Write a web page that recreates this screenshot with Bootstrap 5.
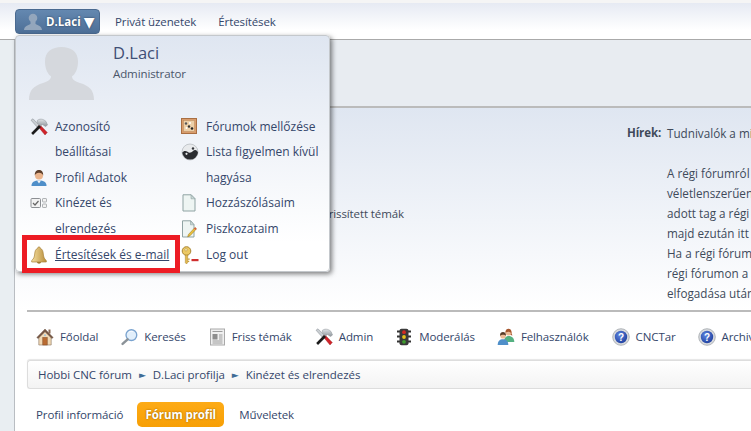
<!DOCTYPE html>
<html lang="hu">
<head>
<meta charset="utf-8">
<title>Kinézet és elrendezés</title>
<link href="https://cdn.jsdelivr.net/npm/bootstrap@5.3.0/dist/css/bootstrap.min.css" rel="stylesheet">
<style>
html,body{height:431px;overflow:hidden}
body{background:#e9eef2;font:11.5px/20px "Open Sans",sans-serif;letter-spacing:-.1px;color:#404a5a;position:relative}
a{color:#34466a;text-decoration:none}
.mk-strip{height:3px;background:#f5f5f5}
.mk-top{height:37px;background:linear-gradient(#e6eaf3,#fff 75%);border-bottom:1px solid #aaa;padding:6px 0 0 15px}
.mk-btn{width:85px;height:25px;background:linear-gradient(#6488b0,#4d6f97);border:1px solid #4a6a90;border-radius:4px;color:#fff;font-weight:700;text-shadow:0 0 2px #24384f;padding:0 0 0 8px}
.mk-tri{font-size:14px;margin-left:3px;font-family:"DejaVu Sans",sans-serif}
.mk-link{margin-left:15px;margin-right:7px;white-space:nowrap;line-height:26px}
.mk-wrap{margin-left:14px;border-left:1px solid #b9bdc2;background:#fff;height:391px;overflow:hidden}
.mk-head{height:68px;background:#e8ecf1;border-bottom:2px solid #bbb}
.mk-upper{height:202px;background:linear-gradient(#dfe6f1,#fff);white-space:nowrap;padding:15px 0 0 0}
.mk-left{width:612px;text-align:right;padding-top:81px;padding-right:223px;flex:none}
.mk-hirek{width:40px;font-weight:700;flex:none}
.mk-news{font-size:11.700px;letter-spacing:0}
.mk-rule{margin:0 0 0 12px;height:2px;background:#bbb}
.mk-menu{margin:14px 0 0 0;padding-left:21px;height:22px;white-space:nowrap}
.mk-menu a{display:flex;align-items:center;gap:6px;margin-right:23px}
.mk-menu a.mk-tight{margin-right:22px}
.mk-crumb{margin:12px 0 0 12px;padding:1px 0 0 10px;height:29px;border:1px solid #ddd;border-right:0;border-radius:3px 0 0 3px;background:linear-gradient(#fff,#f3f3f3);box-shadow:0 -1px 1px #e6e6e6;white-space:nowrap;letter-spacing:-.05px}
.mk-sep{font-size:9px;color:#3f6c96;margin:0 7px;font-family:"DejaVu Sans",sans-serif}
.mk-tabs{margin:13px 0 0 21px;height:25px}
.mk-tab-on{background:linear-gradient(#fdab16,#f79f05);border-radius:5px;color:#fff;font-weight:700;text-shadow:0 0 2px #8a5a00;width:87px;height:25px;margin:0 15px 0 14px}
.mk-drop{position:absolute;left:15px;top:35px;width:315px;height:237px;background:linear-gradient(#dfe6f1,#fff 88%);border:1px solid #c4c8cc;border-radius:4px;box-shadow:2px 2px 5px rgba(0,0,0,.5);z-index:5}
.mk-user{height:75px;padding:6px 0 0 13px;gap:19px}
.mk-name{font-size:16.500px;line-height:22px;color:#3f4f75;letter-spacing:0}
.mk-role{color:#4a566a}
.mk-cols{padding:2.600px 0 0 14px;font-size:12px;letter-spacing:0}
.mk-col-a{width:151px;flex:none}
.mk-item{line-height:25.6px;padding-left:25px;position:relative}
.mk-item svg{position:absolute;left:0;top:4px}
.mk-item a{display:block;width:95px}
.mk-col-b .mk-item a{width:120px}
.mk-marked{z-index:0}
.mk-marked a{text-decoration:underline;width:125px;white-space:nowrap}
.mk-marked::before{content:"";position:absolute;left:-8px;top:-6.500px;width:158px;height:38px;background:#fff;border:5px solid #ed1c24;z-index:-1}
</style>
</head>
<body>
<svg width="0" height="0" class="position-absolute">
<defs>
<linearGradient id="g-head" x1="0" y1="0" x2="0" y2="1"><stop offset="0" stop-color="#dfe3e6"/><stop offset="1" stop-color="#8f969c"/></linearGradient>
<linearGradient id="g-bell" x1="0" y1="0" x2="1" y2="0"><stop offset="0" stop-color="#f5dfa0"/><stop offset="1" stop-color="#b88d3a"/></linearGradient>
<radialGradient id="g-q" cx=".4" cy=".35" r=".7"><stop offset="0" stop-color="#5f86e0"/><stop offset="1" stop-color="#1f3f9e"/></radialGradient>
<symbol id="i-tools" viewBox="0 0 18 18">
<path d="M1 2.200L3 .8l7 7.200-2 2z" fill="#c9ced2" stroke="#858b91" stroke-width=".5"/>
<path d="M8 8.500L10 7l7.300 7.500L15 17z" fill="#d1232a" stroke="#8f1b1f" stroke-width=".4"/>
<path d="M1.200 15L3 17l8-8-2-2z" fill="#1b1b1b"/>
<path d="M7 2.800C9 .5 13 .5 16 3.500L17.500 7l-2 1.500-3-2-2 1.500L8 5.500z" fill="url(#g-head)" stroke="#868c92" stroke-width=".5"/>
</symbol>
<symbol id="i-user" viewBox="0 0 18 18">
<path d="M1.500 17c0-4 2.800-5.500 7.500-5.500s7.500 1.500 7.500 5.500z" fill="#4f8fc9"/>
<path d="M7 11.500h4l-2 3z" fill="#f4f4f4"/>
<circle cx="9" cy="6.500" r="4" fill="#eab48c"/>
<path d="M4.800 6.500C4.600 2.800 6.500 1 9 1s4.400 1.800 4.200 5.500c-.8-1.800-2-2.700-4.200-2.700s-3.400.9-4.200 2.700z" fill="#5e3f2a"/>
</symbol>
<symbol id="i-layout" viewBox="0 0 18 18">
<rect x="1" y="4.500" width="9.500" height="9" rx="1" fill="#f2f2f2" stroke="#8c8f93"/>
<path d="M3 9l2 2 3.500-4" fill="none" stroke="#666" stroke-width="1.200"/>
<rect x="12.500" y="4.500" width="4" height="3.500" rx=".6" fill="#f2f2f2" stroke="#9c9fa3" stroke-width=".8"/>
<rect x="12.500" y="10" width="4" height="3.500" rx=".6" fill="#f2f2f2" stroke="#9c9fa3" stroke-width=".8"/>
</symbol>
<symbol id="i-bell" viewBox="0 0 18 18">
<path d="M9 1c-1 0-1.400.6-1.500 1.500C5.500 3.200 5 5 4.700 8c-.3 3-1 5-3 6.500v1.500h14.600v-1.500c-2-1.500-2.700-3.500-3-6.500-.3-3-.8-4.800-2.800-5.500C10.400 1.600 10 1 9 1z" fill="url(#g-bell)" stroke="#a98239" stroke-width=".7"/>
<path d="M7 16h4c0 1-1 1.700-2 1.700S7 17 7 16z" fill="#a07a30"/>
</symbol>
<symbol id="i-board" viewBox="0 0 16 16">
<rect x=".5" y=".5" width="15" height="15" fill="#d99c6c" stroke="#a96f42"/>
<rect x="2.500" y="2.500" width="11" height="11" fill="#eccfa8" stroke="#b98a5c" stroke-width=".5"/>
<circle cx="5" cy="5.500" r="1.200" fill="#555"/><circle cx="9" cy="5" r="1" fill="#fff"/><circle cx="8" cy="8.500" r="1.200" fill="#333"/><circle cx="11" cy="10.500" r="1.300" fill="#222"/><circle cx="5.500" cy="10" r="1" fill="#fff"/>
</symbol>
<symbol id="i-yin" viewBox="0 0 18 18">
<circle cx="9" cy="9" r="8" fill="#e8eaec" stroke="#a8adb2" stroke-width=".6"/>
<path d="M1.200 9.800A8 8 0 0 0 17 9.800c-.7-3-3.400-3.300-5-1.800-1.700 1.600-3.500 2.500-5.500.800C5 7.500 2.500 7.500 1.200 9.800z" fill="#2a2c30"/>
<circle cx="5.500" cy="10.800" r="1.100" fill="#e8eaec"/><circle cx="12" cy="5.500" r="1.200" fill="#33363b"/>
</symbol>
<symbol id="i-page" viewBox="0 0 16 18">
<path d="M2 .8h8.200L14 4.700V17H2z" fill="#eef5f3" stroke="#8fa3a3"/>
<path d="M10 .8v4h4z" fill="#c9d6d5" stroke="#8fa3a3" stroke-width=".6"/>
</symbol>
<symbol id="i-draft" viewBox="0 0 16 18">
<path d="M1.500 .8h8.200L13 4.700V17H1.500z" fill="#eef5f3" stroke="#8fa3a3"/>
<path d="M9.500 .8v4h3.500z" fill="#c9d6d5" stroke="#8fa3a3" stroke-width=".6"/>
<path d="M14 7.500l1.500 1.300-6.500 7-2.300 1 .8-2.400z" fill="#eec23a" stroke="#9b7a1e" stroke-width=".6"/>
<path d="M14 7.500l1.500 1.300-1 1.100-1.500-1.300z" fill="#d9534a"/>
</symbol>
<symbol id="i-key" viewBox="0 0 18 18">
<circle cx="5.500" cy="5" r="4.300" fill="#ecc964" stroke="#a98533"/>
<circle cx="5" cy="3.800" r="1.200" fill="#fff4c9" stroke="#a98533" stroke-width=".5"/>
<path d="M4.300 9h2.400v7.500L5.500 18 4.300 16.700z" fill="#e2b94c" stroke="#a98533" stroke-width=".5"/>
<path d="M6.700 12.500h2v1.300h-2zM6.700 14.800h1.500v1.200H6.700z" fill="#c99d3a"/>
<rect x="10.500" y="13" width="7" height="2.200" fill="#cf2e2e"/>
</symbol>
<symbol id="i-home" viewBox="0 0 18 18">
<path d="M2.800 8.500L9 2.500l6.200 6V17H2.800z" fill="#f1d9b5" stroke="#8a7360" stroke-width=".6"/>
<path d="M.8 9.500L9 1l8.200 8.500-1.300 1L9 3.700 2.100 10.500z" fill="#7a5a48" stroke="#5b4335" stroke-width=".4"/>
<rect x="12.500" y="1.500" width="2" height="4" fill="#8a6a55"/>
<rect x="6.800" y="9.500" width="4.400" height="7.500" fill="#b96b32" stroke="#7b4520" stroke-width=".5"/>
<circle cx="9" cy="7.300" r="1" fill="#9fc3df"/>
</symbol>
<symbol id="i-search" viewBox="0 0 18 18">
<circle cx="11" cy="7" r="5.700" fill="#e2effb" stroke="#7aa3cf" stroke-width="1.400"/>
<path d="M7 11.500L1.700 16.300" stroke="#8b9298" stroke-width="2.600" stroke-linecap="round"/>
<path d="M8 4.500c1.200-1.500 3-1.800 4.500-1.200" stroke="#fff" fill="none"/>
</symbol>
<symbol id="i-news" viewBox="0 0 16 18">
<rect x="1" y="1" width="14" height="16" fill="#efefef" stroke="#a9a9a9"/>
<path d="M3 3.500h10M3 13h10M3 15h10M9.500 7h3.500M9.500 9h3.500M9.500 11h3.500" stroke="#9c9c9c"/>
<rect x="3" y="6" width="5" height="5.500" fill="#8d8d8d"/>
</symbol>
<symbol id="i-light" viewBox="0 0 16 18">
<path d="M1 3.500h3M12 3.500h3M1 8.500h3M12 8.500h3M1 13.500h3M12 13.500h3" stroke="#333" stroke-width="2"/>
<rect x="3.500" y=".8" width="9" height="16.400" rx="2" fill="#3a3a3a"/>
<circle cx="8" cy="4.200" r="1.900" fill="#d22a22"/><circle cx="8" cy="9" r="1.900" fill="#e5c41c"/><circle cx="8" cy="13.800" r="1.900" fill="#3f9b2e"/>
</symbol>
<symbol id="i-users" viewBox="0 0 18 18">
<circle cx="11.500" cy="4.500" r="3" fill="#edbb96"/><path d="M8.500 5C8.200 1.800 9.800.7 11.500.7s3.400 1.100 3 4.800l1 2-2-.5c1-2 0-3.300-2-3.300s-2.800 1-3 1.300z" fill="#a5562d"/>
<path d="M7 14c0-4 2-6 4.500-6s5.800 1.500 5.800 6z" fill="#55b182"/>
<circle cx="6" cy="7.800" r="2.800" fill="#edbb96"/><path d="M3 7.800c0-3 1.500-3.700 3-3.700s3 .7 3 3.700c-1-1.500-4.500-1.500-6 0z" fill="#5a3c29"/>
<path d="M.7 17c0-4 2-5.800 5.300-5.800s5.300 1.800 5.300 5.800z" fill="#4f8fc9"/>
</symbol>
<symbol id="i-help" viewBox="0 0 18 18">
<circle cx="9" cy="9" r="8.300" fill="#d8dadd" stroke="#9a9ea3" stroke-width=".7"/>
<circle cx="9" cy="9" r="6.200" fill="url(#g-q)"/>
<text x="9" y="12.500" font-size="10" font-weight="700" fill="#fff" text-anchor="middle" font-family="Liberation Sans,sans-serif">?</text>
</symbol>
</defs>
</svg>

<div class="mk-strip"></div>
<nav class="mk-top d-flex">
  <button type="button" class="mk-btn d-flex align-items-center">
    <svg width="18" height="17" viewBox="0 0 18 17" class="flex-shrink-0 me-1"><circle cx="9" cy="5" r="4.300" fill="#93a6bc"/><path d="M0 17c.3-4 4-4.500 6.500-6h5c2.500 1.500 6.200 2 6.500 6z" fill="#93a6bc"/><rect x="6.500" y="7" width="5" height="5" fill="#93a6bc"/></svg>
    <span>D.Laci</span><span class="mk-tri">▼</span>
  </button>
  <a class="mk-link" href="#">Privát üzenetek</a>
  <a class="mk-link" href="#">Értesítések</a>
</nav>

<main class="mk-wrap">
  <div class="mk-head"></div>
  <div class="mk-upper d-flex">
    <div class="mk-left">Frissített témák</div>
    <div class="mk-hirek">Hírek:</div>
    <div class="mk-news">
      Tudnivalók a mi<br><br>
      A régi fórumról<br>
      véletlenszerűen<br>
      adott tag a régi<br>
      majd ezután itt<br>
      Ha a régi fórum<br>
      régi fórumon a<br>
      elfogadása után
    </div>
  </div>
  <div class="mk-rule"></div>
  <div class="mk-menu d-flex">
    <a href="#"><svg width="18" height="18"><use href="#i-home"/></svg>Főoldal</a>
    <a href="#"><svg width="17" height="18"><use href="#i-search"/></svg>Keresés</a>
    <a href="#"><svg width="17" height="18"><use href="#i-news"/></svg>Friss témák</a>
    <a href="#" class="mk-tight"><svg width="18" height="18"><use href="#i-tools"/></svg>Admin</a>
    <a href="#" class="mk-tight"><svg width="18" height="18"><use href="#i-light"/></svg>Moderálás</a>
    <a href="#"><svg width="18" height="18"><use href="#i-users"/></svg>Felhasználók</a>
    <a href="#" class="mk-tight"><svg width="18" height="18"><use href="#i-help"/></svg>CNCTar</a>
    <a href="#"><svg width="18" height="18"><use href="#i-help"/></svg>Archiv</a>
  </div>
  <div class="mk-crumb d-flex align-items-center">
    <a href="#">Hobbi CNC fórum</a><span class="mk-sep">►</span><a href="#">D.Laci profilja</a><span class="mk-sep">►</span><a href="#">Kinézet és elrendezés</a>
  </div>
  <div class="mk-tabs d-flex align-items-center">
    <a href="#">Profil információ</a>
    <a href="#" class="mk-tab-on d-flex align-items-center justify-content-center">Fórum profil</a>
    <a href="#">Műveletek</a>
  </div>
</main>

<div class="mk-drop">
  <div class="mk-user d-flex">
    <svg width="65" height="54" viewBox="0 0 65 57" preserveAspectRatio="none" class="flex-shrink-0 mt-1"><path d="M0 57c0-11 5-15 14-18 6-2 8-4 8-7-4-3-6-9-6-16C16 6 23 1 32.500 1S49 6 49 16c0 7-2 13-6 16 0 3 2 5 8 7 9 3 14 7 14 18z" fill="#d5d8dd"/></svg>
    <div>
      <div class="mk-name">D.Laci</div>
      <div class="mk-role">Administrator</div>
    </div>
  </div>
  <div class="mk-cols d-flex">
    <div class="mk-col-a">
      <div class="mk-item"><svg width="18" height="18"><use href="#i-tools"/></svg><a href="#">Azonosító beállításai</a></div>
      <div class="mk-item"><svg width="18" height="18"><use href="#i-user"/></svg><a href="#">Profil Adatok</a></div>
      <div class="mk-item"><svg width="18" height="18"><use href="#i-layout"/></svg><a href="#">Kinézet és elrendezés</a></div>
      <div class="mk-item mk-marked"><svg width="18" height="18"><use href="#i-bell"/></svg><a href="#">Értesítések és e-mail</a></div>
    </div>
    <div class="mk-col-b">
      <div class="mk-item"><svg width="16" height="16"><use href="#i-board"/></svg><a href="#">Fórumok mellőzése</a></div>
      <div class="mk-item"><svg width="18" height="18"><use href="#i-yin"/></svg><a href="#">Lista figyelmen kívül hagyása</a></div>
      <div class="mk-item"><svg width="16" height="18"><use href="#i-page"/></svg><a href="#">Hozzászólásaim</a></div>
      <div class="mk-item"><svg width="16" height="18"><use href="#i-draft"/></svg><a href="#">Piszkozataim</a></div>
      <div class="mk-item"><svg width="18" height="18"><use href="#i-key"/></svg><a href="#">Log out</a></div>
    </div>
  </div>
</div>
<script src="https://cdn.jsdelivr.net/npm/bootstrap@5.3.0/dist/js/bootstrap.bundle.min.js"></script>
</body>
</html>
